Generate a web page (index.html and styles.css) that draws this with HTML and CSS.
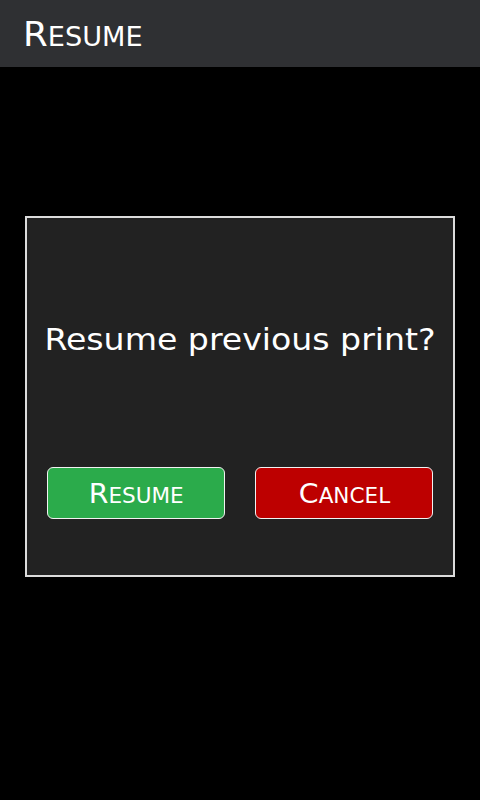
FILE: index.html
```html
<!DOCTYPE html>
<html>
<head>
<meta charset="utf-8">
<link rel="stylesheet" href="styles.css">
</head>
<body>
<header class="topbar">
  <span class="title wide caps">R<span class="sc">ESUME</span></span>
</header>
<main class="screen">
  <section class="dialog">
    <p class="question"><span class="wide">Resume previous print?</span></p>
    <div class="actions">
      <button class="btn btn-ok"><span class="wide caps">R<span class="sc">ESUME</span></span></button>
      <button class="btn btn-cancel"><span class="wide caps">C<span class="sc">ANCEL</span></span></button>
    </div>
  </section>
</main>
</body>
</html>
```
FILE: styles.css
```css
* { box-sizing: border-box; }
html, body {
  margin: 0;
  padding: 0;
  background: #000;
  width: 480px;
  height: 800px;
  overflow: hidden;
  font-family: "DejaVu Sans", sans-serif;
  color: #fff;
}
.wide {
  display: inline-block;
  transform: scaleX(1.105);
  transform-origin: center;
}
.wide.caps { transform: scaleX(1.05); }
.sc { font-size: 0.76em; }
.topbar {
  height: 67px;
  background: #2f3033;
  padding: 14px 0 0 23px;
}
.title {
  font-size: 34px;
  line-height: normal;
}
.wide.title { transform-origin: left center; }
.screen {
  padding: 149px 0 0 25px;
}
.dialog {
  width: 430px;
  height: 361px;
  background: #222222;
  border: 2px solid #dcdcdc;
  padding: 104px 20px 0;
}
.question {
  margin: 0;
  font-size: 30px;
  line-height: normal;
  text-align: center;
  white-space: nowrap;
}
.actions {
  display: flex;
  gap: 30px;
  margin-top: 110px;
}
.btn {
  flex: 1;
  height: 52px;
  border: 1px solid #f2f2f2;
  border-radius: 6px;
  color: #fff;
  font-family: "DejaVu Sans", sans-serif;
  font-size: 27px;
  line-height: normal;
  padding: 0;
  display: flex;
  align-items: center;
  justify-content: center;
}
.btn-ok { background: #2bab4b; }
.btn-cancel { background: #bd0000; }
```
